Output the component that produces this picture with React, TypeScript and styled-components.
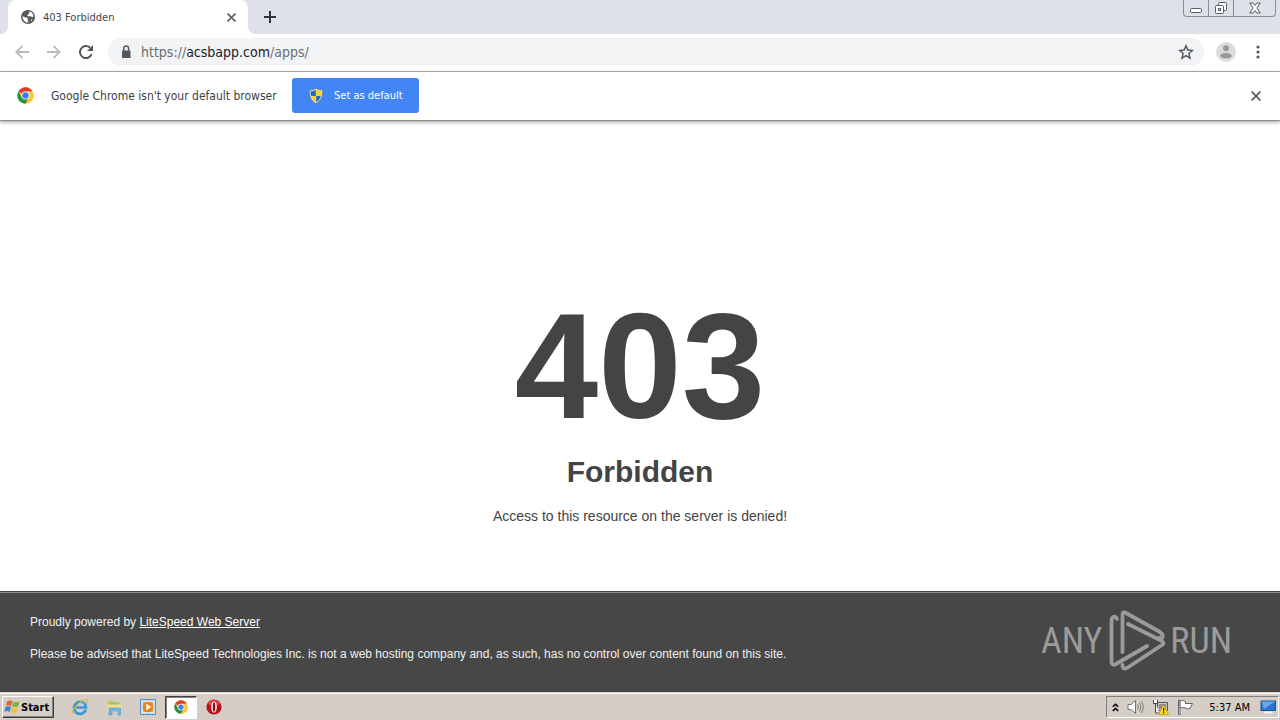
import React from 'react';
import styled, { createGlobalStyle } from 'styled-components';

const ui = '"DejaVu Sans Condensed", "DejaVu Sans", Tahoma, sans-serif';
const page = '"Liberation Sans", Arial, sans-serif';

const GlobalStyle = createGlobalStyle`
  *, *::before, *::after { box-sizing: border-box; }
  body { margin: 0; background: #fff; }
  button { margin: 0; padding: 0; border: 0; background: none; font: inherit; color: inherit; cursor: pointer; }
  svg { display: block; flex: none; }
`;

const Desktop = styled.div`
  display: flex;
  flex-direction: column;
  min-height: 100vh;
  font-family: ${ui};
`;

const TabStrip = styled.header`
  display: flex;
  align-items: flex-start;
  height: 34px;
  padding: 0 4px 0 8px;
  background: #dee1e8;
`;

const Tab = styled.div`
  position: relative;
  display: flex;
  align-items: center;
  gap: 8px;
  width: 240px;
  height: 34px;
  padding: 0 9px 0 13px;
  border-radius: 8px 8px 0 0;
  background: #fff;
  color: #45484c;
  font-size: 11px;

  &::before, &::after {
    content: '';
    position: absolute;
    bottom: 0;
    width: 8px;
    height: 8px;
  }
  &::before { right: 100%; background: radial-gradient(circle at 0 0, transparent 8px, #fff 8px); }
  &::after { left: 100%; background: radial-gradient(circle at 100% 0, transparent 8px, #fff 8px); }
`;

const TabTitle = styled.span`
  flex: 1;
  white-space: nowrap;
`;

const IconButton = styled.button<{ $w?: number; $h?: number }>`
  display: flex;
  align-items: center;
  justify-content: center;
  flex: none;
  width: ${p => p.$w ?? 16}px;
  height: ${p => p.$h ?? 16}px;
`;

const WindowControls = styled.div`
  display: flex;
  height: 17px;
  margin-left: auto;
  border: 1px solid #8a8e94;
  border-top: 0;
  border-radius: 0 0 4px 4px;
`;

const WindowButton = styled(IconButton)`
  & + & { border-left: 1px solid #8a8e94; }
`;

const Toolbar = styled.div`
  display: flex;
  align-items: center;
  height: 38px;
  padding: 0 12px 2px 12px;
  border-bottom: 1px solid #b5b5b5;
`;

const NavButtons = styled.nav`
  display: flex;
  gap: 12px;
  margin-right: 12px;
`;

const AddressBar = styled.div`
  display: flex;
  align-items: center;
  flex: 1;
  gap: 7px;
  height: 28px;
  padding: 0 10px 0 10px;
  border-radius: 14px;
  background: #f1f3f5;
`;

const Url = styled.div`
  flex: 1;
  color: #6b6f74;
  font-size: 14px;
  line-height: 20px;
  white-space: nowrap;
  outline: none;
`;

const Host = styled.span`
  color: #202124;
`;

const ToolbarActions = styled.div`
  display: flex;
  align-items: center;
  gap: 12px;
  margin-left: 12px;
`;

const InfoBar = styled.div`
  position: relative;
  display: flex;
  align-items: center;
  height: 49px;
  padding: 0 16px 1px 17px;
  border-bottom: 1px solid #8c8c8c;
  box-shadow: 0 1px 4px rgba(0, 0, 0, 0.4);
  color: #3c3f43;
  font-size: 12px;
`;

const InfoText = styled.span`
  width: 228px;
  margin: 0 13px 0 17px;
  white-space: nowrap;
`;

const DefaultButton = styled.button`
  display: flex;
  align-items: center;
  gap: 10px;
  height: 35px;
  margin-right: auto;
  padding: 0 16px;
  border-radius: 3px;
  background: #4286f5;
  color: #fff;
  font-size: 11px;
  white-space: nowrap;
`;

const ErrorPage = styled.main`
  flex: 1;
  padding: 170px 20px 40px;
  background: #fff;
  color: #444;
  font-family: ${page};
  text-align: center;
`;

const Code = styled.h1`
  margin: 0;
  font-size: 150px;
  line-height: 150px;
`;

const Reason = styled.h2`
  margin: 13px 0 0;
  font-size: 30px;
  line-height: 36px;
`;

const Explanation = styled.p`
  margin: 18px 0 0;
  font-size: 14px;
  line-height: 16px;
`;

const PageFooter = styled.footer`
  display: flex;
  align-items: center;
  justify-content: space-between;
  height: 101px;
  padding: 0 48px 0 30px;
  border-top: 1px solid #444;
  box-shadow: inset 0 1px 0 #8c8c8c;
  background: #474747;
  color: #f0f0f0;
  font-family: ${page};
  font-size: 12px;
  line-height: 16px;
`;

const Notice = styled.div`
  display: flex;
  flex-direction: column;
  gap: 16px;
  padding-bottom: 8px;
`;

const Paragraph = styled.p`
  margin: 0;
`;

const Link = styled.a`
  color: #fff;
  text-decoration: underline;
`;

const Watermark = styled.div`
  display: flex;
  align-items: center;
  flex: none;
  padding-bottom: 3px;
  color: #9b9b9b;
  font-family: "Roboto Condensed", "Roboto", sans-serif;
  font-size: 36px;
  font-weight: 400;
  line-height: 72px;
`;

const Taskbar = styled.footer`
  display: flex;
  align-items: center;
  height: 28px;
  padding: 1px 1px 0 2px;
  border-top: 1px solid #d4d0c8;
  box-shadow: inset 0 1px 0 #fff;
  background: #d5cec6;
  color: #000;
  font-size: 11px;
`;

const StartButton = styled.button`
  display: flex;
  align-items: center;
  width: 52px;
  height: 22px;
  margin-right: 9px;
  padding: 0 1px;
  border: 1px solid;
  border-color: #fff #404040 #404040 #fff;
  box-shadow: inset -1px -1px 0 #808080;
  font-weight: bold;
`;

const TaskButton = styled.button<{ $active?: boolean }>`
  display: flex;
  align-items: center;
  justify-content: center;
  width: ${p => (p.$active ? 32 : 34)}px;
  height: 23px;
  ${p => p.$active && `
    background: #fff;
    border: 1px solid;
    border-color: #404040 #fff #fff #404040;
    box-shadow: inset 1px 1px 0 #808080;
  `}
`;

const Tray = styled.div`
  display: flex;
  align-items: center;
  gap: 8px;
  height: 22px;
  margin-left: auto;
  padding: 0 1px 0 4px;
  border: 1px solid;
  border-color: #808080 #fff #fff #808080;
`;

const Clock = styled.time`
  margin: 0 2px 0 7px;
  white-space: nowrap;
`;

const CrossIcon = ({ size = 10, color = '#5f6368' }: { size?: number; color?: string }) => (
  <svg width={size} height={size} viewBox="0 0 10 10" fill="none" stroke={color} strokeWidth="1.9">
    <path d="M.5.5l9 9M9.500.5l-9 9" />
  </svg>
);

const GlobeIcon = () => (
  <svg width="14" height="14" viewBox="0 0 14 14">
    <circle cx="7" cy="7" r="7" fill="#55595d" />
    <path d="M8.5 1.6C10.800 2 12.500 4.200 12.500 6.600L11 7.200 9.300 6 7.200 6.500 6 5.200 7.700 4.300z" fill="#fff" />
    <path d="M1.500 6.300l3 1.200 1.700.2.800 1.600-.6 1.200 1 .6-.2 1.500C4 12.500 1.400 10 1.500 6.300z" fill="#fff" />
    <path d="M9.800 9.500l1.800.2-1.600 1.600z" fill="#fff" />
  </svg>
);

const ChromeIcon = ({ size }: { size: number }) => (
  <svg width={size} height={size} viewBox="0 0 48 48">
    <circle cx="24" cy="24" r="23" fill="#fbc116" />
    <path d="M24 24L4.100 12.500A23 23 0 0 1 43.900 12.500H24z" fill="#e33b2e" />
    <path d="M4.100 12.500A23 23 0 0 0 24 47L34 29.800 24 24 14 29.800z" fill="#229342" />
    <path d="M43.900 12.500A23 23 0 0 1 24 47L34 29.800 30 13z" fill="#fcc934" />
    <circle cx="24" cy="24" r="11.500" fill="#fff" />
    <circle cx="24" cy="24" r="9" fill="#3f7ee8" />
  </svg>
);

const ShieldIcon = () => (
  <svg width="16" height="16" viewBox="0 0 16 16">
    <path d="M8 .3C10 1.600 12 2 14.800 2 15 8 13.300 13 8 15.700 2.700 13 1 8 1.200 2 4 2 6 1.600 8 .3z" fill="#d9dccb" stroke="#51687c" strokeWidth=".6" />
    <path d="M7.800 2C6.300 2.900 4.700 3.300 2.700 3.300 2.600 5.200 2.800 6.500 3.200 8h4.600z" fill="#2667bd" />
    <path d="M8.200 2C9.700 2.900 11.300 3.300 13.300 3.300 13.400 5.200 13.200 6.500 12.800 8H8.200z" fill="#f6d629" />
    <path d="M3.200 8h4.600v6.200C5.500 12.800 3.900 10.700 3.200 8z" fill="#f6d629" />
    <path d="M12.800 8H8.200v6.200c2.300-1.400 3.900-3.500 4.600-6.200z" fill="#2667bd" />
  </svg>
);

const AnyRunMark = () => (
  <svg width="68" height="72" viewBox="0 0 68 72" fill="none" stroke="#9b9b9b" strokeWidth="3.800" strokeLinecap="round" strokeLinejoin="round">
    <path d="M15 14Q14 11 11 12Q9.500 13 9.500 16V57Q10 61 14 59L45 41" />
    <path d="M20.500 47V10Q20.500 6 24 8L58 27Q62 30 60 33L57 33" />
    <path d="M26 19L60 36Q63 38 60 40L25 63Q20 65 20.500 60" />
  </svg>
);

const WindowsFlag = () => (
  <svg width="17" height="16" viewBox="0 0 17 16">
    <path d="M3 2.500Q6 .5 8.500 2.200L7.300 7Q4.500 5.500 1.800 7z" fill="#e8652a" />
    <path d="M9.500 2.700Q12 4 15.500 2.600L14.200 7.300Q11 8.700 8.300 7.500z" fill="#7eb63c" />
    <path d="M1.500 8Q4.300 6.600 7 8.100L5.800 12.800Q3 11.400.300 12.800z" fill="#3d83cf" />
    <path d="M8 8.600Q11 9.800 13.900 8.400L12.600 13.200Q9.500 14.700 6.800 13.300z" fill="#f5c12e" />
  </svg>
);

const ExplorerIcon = () => (
  <svg width="18" height="18" viewBox="0 0 18 18" fill="none">
    <path d="M14.800 11.500A6 6 0 1 1 15 9.500H5" stroke="#3599d8" strokeWidth="2.700" />
    <path d="M4.500 8.500Q8 4.500 13 6" stroke="#a9def7" strokeWidth="1" />
    <path d="M2.500 15.500C-1 15 5 6 12 2.500 17 0 18 2 15.500 5.500" stroke="#dfb53c" strokeWidth="1.300" />
  </svg>
);

const FolderIcon = () => (
  <svg width="17" height="17" viewBox="0 0 17 17">
    <path d="M2 2h5l1 1h6v9H2z" fill="#dfbd52" />
    <path d="M4 3.500h9V8H4z" fill="#8fc87d" />
    <path d="M1 5.500h14.500V13H1z" fill="#f5dd8a" />
    <path d="M3 9h11.500v7h-2.500v-4H6v4H3z" fill="#6fb6e3" stroke="#4a97cb" strokeWidth=".6" />
  </svg>
);

const PlayerIcon = () => (
  <svg width="16" height="16" viewBox="0 0 16 16">
    <path d="M.5.500h15v15H.5z" fill="#b9dcf3" stroke="#5591c4" />
    <path d="M2.500 2.500h11v11h-11z" fill="#f4a23c" stroke="#e9f4fb" strokeWidth=".8" />
    <circle cx="8" cy="8" r="5.300" fill="#ef8014" />
    <path d="M6.300 4.800L11.500 8l-5.200 3.200z" fill="#fff" />
  </svg>
);

const OperaIcon = () => (
  <svg width="16" height="16" viewBox="0 0 16 16">
    <circle cx="8" cy="8" r="7.600" fill="#b5121c" />
    <path d="M2 5a6.500 6.500 0 0 1 12 0Q8 8 2 5z" fill="#d8474c" />
    <ellipse cx="8" cy="8" rx="2.800" ry="5.600" fill="#fff" />
    <ellipse cx="8" cy="8" rx="1.300" ry="4.800" fill="#8e0c14" />
  </svg>
);

const SpeakerIcon = () => (
  <svg width="17" height="16" viewBox="0 0 17 16" fill="none" stroke="#737373">
    <path d="M1 5.500h3L8.500 1.500v13L4 10.500H1z" fill="#fff" />
    <path d="M10.500 5.500q1.500 2.500 0 5M12.500 3.500q3 4.500 0 9M14.500 2q3.500 6 0 12" strokeWidth=".9" />
  </svg>
);

const NetworkIcon = () => (
  <svg width="17" height="16" viewBox="0 0 17 16">
    <path d="M5.500 3.500h10v8h-10z" fill="#c9c9c9" stroke="#555" />
    <path d="M7 5h7v5H7z" fill="#8c8c8c" />
    <path d="M1.500 1v3.500h4V1M3.500 4.500V14h4" fill="#fff" stroke="#444" />
    <path d="M11.500 6L16.500 15.500h-10z" fill="#ffdc20" stroke="#c29a00" strokeWidth=".7" />
    <path d="M11 9h1.200v3.500H11zM11 13.300h1.200v1.200H11z" fill="#222" />
  </svg>
);

const FlagIcon = () => (
  <svg width="17" height="16" viewBox="0 0 17 16" fill="#fff" stroke="#666">
    <path d="M1.500 1v14.500h1.500V1z" />
    <path d="M3 2q3-1.500 5.500.5v2h7L13 9.500q-2.500 1-4.500-.5-2.500-1-5.500 0z" />
  </svg>
);

const MonitorIcon = () => (
  <svg width="17" height="14" viewBox="0 0 17 14">
    <path d="M1 1h14.500v9.500H1z" fill="#2d72cf" stroke="#1e4e94" />
    <path d="M1.500 1.500h13.500L4 9z" fill="#6ba5e8" />
    <path d="M5 11.500h7l1 2H4z" fill="#f5f5f5" />
  </svg>
);

export default function App() {
  return (
    <>
      <GlobalStyle />
      <Desktop>
        <TabStrip>
          <Tab>
            <GlobeIcon />
            <TabTitle>403 Forbidden</TabTitle>
            <IconButton aria-label="Close tab"><CrossIcon size={9} /></IconButton>
          </Tab>
          <IconButton $w={44} $h={34} aria-label="New tab">
            <svg width="12" height="12" viewBox="0 0 12 12" stroke="#303338" strokeWidth="2"><path d="M6 0v12M0 6h12" /></svg>
          </IconButton>
          <WindowControls>
            <WindowButton $w={24} aria-label="Minimize">
              <svg width="12" height="12" viewBox="0 0 12 12" fill="#fff" stroke="#565c66"><rect x=".5" y="6.500" width="11" height="4" rx="1" /></svg>
            </WindowButton>
            <WindowButton $w={25} aria-label="Restore">
              <svg width="14" height="14" viewBox="0 0 14 14" fill="#fff" stroke="#565c66">
                <rect x="4.500" y="1.500" width="8" height="8" rx="1" />
                <rect x="1.500" y="4.500" width="8" height="8" rx="1" />
                <rect x="4.500" y="7.500" width="2" height="2" />
              </svg>
            </WindowButton>
            <WindowButton $w={42} aria-label="Close window">
              <svg width="12" height="12" viewBox="0 0 12 12" fill="#fff" stroke="#565c66">
                <path d="M.8 1h3.400L6 3.500 7.800 1h3.400L8 6l3.200 5H7.800L6 8.500 4.200 11H.8L4 6z" />
              </svg>
            </WindowButton>
          </WindowControls>
        </TabStrip>

        <Toolbar>
          <NavButtons>
            <IconButton $w={20} $h={20} aria-label="Back">
              <svg width="14" height="14" viewBox="0 0 14 14" fill="none" stroke="#b9bbbe" strokeWidth="1.800"><path d="M14 7H1.500M7.500.8L1.300 7l6.200 6.200" /></svg>
            </IconButton>
            <IconButton $w={20} $h={20} aria-label="Forward">
              <svg width="14" height="14" viewBox="0 0 14 14" fill="none" stroke="#b9bbbe" strokeWidth="1.800"><path d="M0 7h12.500M6.500.8L12.700 7l-6.200 6.200" /></svg>
            </IconButton>
            <IconButton $w={20} $h={20} aria-label="Reload">
              <svg width="14" height="14" viewBox="0 0 14 14"><path d="M12.600 9.200A6 6 0 1 1 11.200 2.800" fill="none" stroke="#54585d" strokeWidth="2" /><path d="M14 0v6H8z" fill="#54585d" /></svg>
            </IconButton>
          </NavButtons>
          <AddressBar>
            <svg width="16" height="14" viewBox="0 0 16 14">
              <path d="M4 5.500h8.500V13H4z" fill="#55595e" />
              <path d="M5.800 6V3.500a2.400 2.400 0 0 1 4.800 0V6" fill="none" stroke="#55595e" strokeWidth="1.500" />
            </svg>
            <Url role="textbox" aria-label="Address" contentEditable suppressContentEditableWarning spellCheck={false}>
              https://<Host>acsbapp.com</Host>/apps/
            </Url>
            <IconButton aria-label="Bookmark this page">
              <svg width="16" height="16" viewBox="0 0 16 16" fill="none" stroke="#55595e" strokeWidth="1.500"><path d="M8 1.800l1.800 4.300 4.600.4-3.500 3 1.100 4.600L8 11.700l-4 2.400 1.100-4.600-3.500-3 4.600-.4z" /></svg>
            </IconButton>
          </AddressBar>
          <ToolbarActions>
            <IconButton $w={20} $h={20} aria-label="Profile">
              <svg width="20" height="20" viewBox="0 0 20 20"><circle cx="10" cy="10" r="10" fill="#dcdcdc" /><circle cx="10" cy="6.300" r="3" fill="#989898" /><ellipse cx="10" cy="13.800" rx="5.800" ry="2.800" fill="#989898" /></svg>
            </IconButton>
            <IconButton $w={20} $h={20} aria-label="Menu">
              <svg width="4" height="14" viewBox="0 0 4 14" fill="#55595e"><circle cx="2" cy="2" r="1.600" /><circle cx="2" cy="7" r="1.600" /><circle cx="2" cy="12" r="1.600" /></svg>
            </IconButton>
          </ToolbarActions>
        </Toolbar>

        <InfoBar>
          <ChromeIcon size={17} />
          <InfoText>Google Chrome isn't your default browser</InfoText>
          <DefaultButton><ShieldIcon />Set as default</DefaultButton>
          <IconButton aria-label="Dismiss"><CrossIcon /></IconButton>
        </InfoBar>

        <ErrorPage>
          <Code>403</Code>
          <Reason>Forbidden</Reason>
          <Explanation>Access to this resource on the server is denied!</Explanation>
        </ErrorPage>

        <PageFooter>
          <Notice>
            <Paragraph>Proudly powered by <Link href="#litespeed">LiteSpeed Web Server</Link></Paragraph>
            <Paragraph>Please be advised that LiteSpeed Technologies Inc. is not a web hosting company and, as such, has no control over content found on this site.</Paragraph>
          </Notice>
          <Watermark><span>ANY</span><AnyRunMark /><span>RUN</span></Watermark>
        </PageFooter>

        <Taskbar>
          <StartButton><WindowsFlag />Start</StartButton>
          <TaskButton aria-label="Internet Explorer"><ExplorerIcon /></TaskButton>
          <TaskButton aria-label="Windows Explorer"><FolderIcon /></TaskButton>
          <TaskButton aria-label="Media Player"><PlayerIcon /></TaskButton>
          <TaskButton $active aria-label="Google Chrome"><ChromeIcon size={14} /></TaskButton>
          <TaskButton aria-label="Opera"><OperaIcon /></TaskButton>
          <Tray>
            <IconButton $w={8} aria-label="Show hidden icons">
              <svg width="7" height="9" viewBox="0 0 7 9" fill="none" stroke="#000" strokeWidth="1.500"><path d="M.8 3.800L3.500 1.200l2.700 2.600M.8 8L3.500 5.400 6.200 8" /></svg>
            </IconButton>
            <SpeakerIcon />
            <NetworkIcon />
            <FlagIcon />
            <Clock>5:37 AM</Clock>
            <MonitorIcon />
          </Tray>
        </Taskbar>
      </Desktop>
    </>
  );
}
